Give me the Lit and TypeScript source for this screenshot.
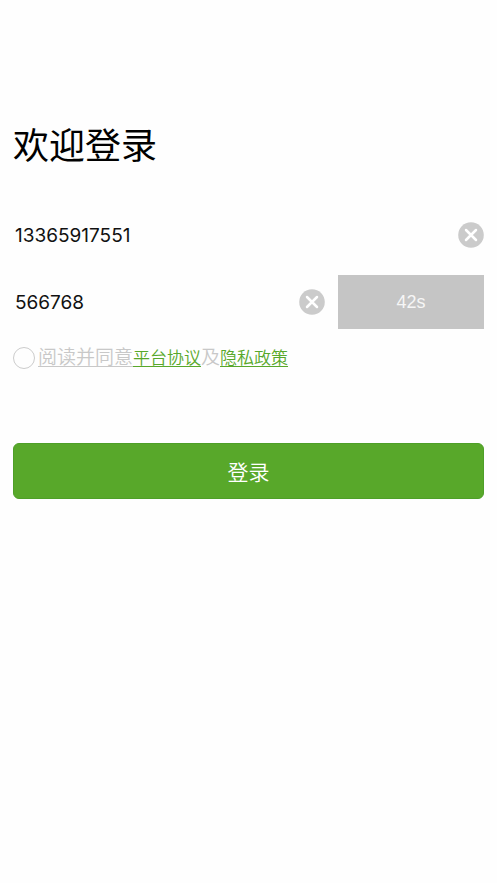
import { LitElement, html, css } from "lit";
import { customElement, state } from "lit/decorators.js";

const clearIcon = html`
  <svg viewBox="0 0 26 26" width="26" height="26" aria-hidden="true">
    <circle cx="13" cy="13" r="12.8" fill="#cbcbcb" />
    <path d="M8 8 L18 18 M18 8 L8 18" stroke="#fff" stroke-width="2.5" stroke-linecap="round" />
  </svg>`;

@customElement("app-root")
export class AppRoot extends LitElement {
  @state() phone = "13365917551";
  @state() code = "566768";

  static styles = css`
    :host {
      display: block;
      box-sizing: border-box;
      min-height: 100vh;
      padding: 122px 13px 32px;
      background: #fefefe;
      color: #111;
      font-family: "Inter", "Noto Sans CJK SC", sans-serif;
    }
    h1 {
      margin: 0;
      font-size: 36px;
      line-height: 48px;
      font-weight: 400;
      color: #000;
    }
    form {
      display: flex;
      flex-direction: column;
      margin-top: 38px;
    }
    .row {
      display: flex;
      align-items: center;
      height: 54px;
      margin-bottom: 13px;
    }
    .field {
      flex: 1;
      min-width: 0;
      height: 40px;
      padding: 0 2px;
      border: 0;
      outline: none;
      background: transparent;
      font: inherit;
      font-size: 19px;
      color: #111;
    }
    button {
      border: 0;
      padding: 0;
      font: inherit;
      cursor: pointer;
    }
    .clear {
      display: flex;
      background: none;
    }
    .countdown {
      width: 31%;
      height: 54px;
      margin-left: 13px;
      background: #c5c5c5;
      color: #f6f6f6;
      font-family: "Liberation Sans", sans-serif;
      font-size: 18px;
    }
    .agreement {
      display: flex;
      align-items: center;
      height: 32px;
    }
    .check {
      appearance: none;
      flex: none;
      box-sizing: border-box;
      width: 22px;
      height: 22px;
      margin: 0 3px 0 0;
      border: 1px solid #ccc;
      border-radius: 50%;
    }
    .check:checked {
      background: #58a82a;
    }
    .terms {
      font-size: 19px;
      line-height: 32px;
      font-weight: 350;
      color: #c8c8c8;
      white-space: nowrap;
    }
    .terms label {
      text-decoration: underline;
      text-decoration-thickness: 1px;
      text-underline-offset: 2px;
    }
    .terms a {
      font-size: 17px;
      color: #58a82a;
      text-decoration: underline;
      text-decoration-thickness: 1px;
      text-underline-offset: 2px;
    }
    .submit {
      height: 56px;
      margin-top: 69px;
      box-sizing: border-box;
      border: 1px solid #4e9f28;
      border-radius: 6px;
      background: #58a82a;
      color: #fff;
      font-size: 21px;
      font-weight: 350;
    }
  `;

  render() {
    return html`
      <h1>欢迎登录</h1>
      <form @submit=${(e: Event) => e.preventDefault()}>
        <div class="row">
          <input class="field" type="tel" aria-label="手机号" .value=${this.phone}
            @input=${(e: Event) => (this.phone = (e.target as HTMLInputElement).value)} />
          <button class="clear" type="button" aria-label="清除手机号" @click=${() => (this.phone = "")}>${clearIcon}</button>
        </div>
        <div class="row">
          <input class="field" type="text" inputmode="numeric" aria-label="验证码" .value=${this.code}
            @input=${(e: Event) => (this.code = (e.target as HTMLInputElement).value)} />
          <button class="clear" type="button" aria-label="清除验证码" @click=${() => (this.code = "")}>${clearIcon}</button>
          <button class="countdown" type="button">42s</button>
        </div>
        <div class="agreement">
          <input class="check" id="agree" type="checkbox" />
          <span class="terms"><label for="agree">阅读并同意</label><a href="#terms">平台协议</a>及<a href="#privacy">隐私政策</a></span>
        </div>
        <button class="submit" type="submit">登录</button>
      </form>
    `;
  }
}
